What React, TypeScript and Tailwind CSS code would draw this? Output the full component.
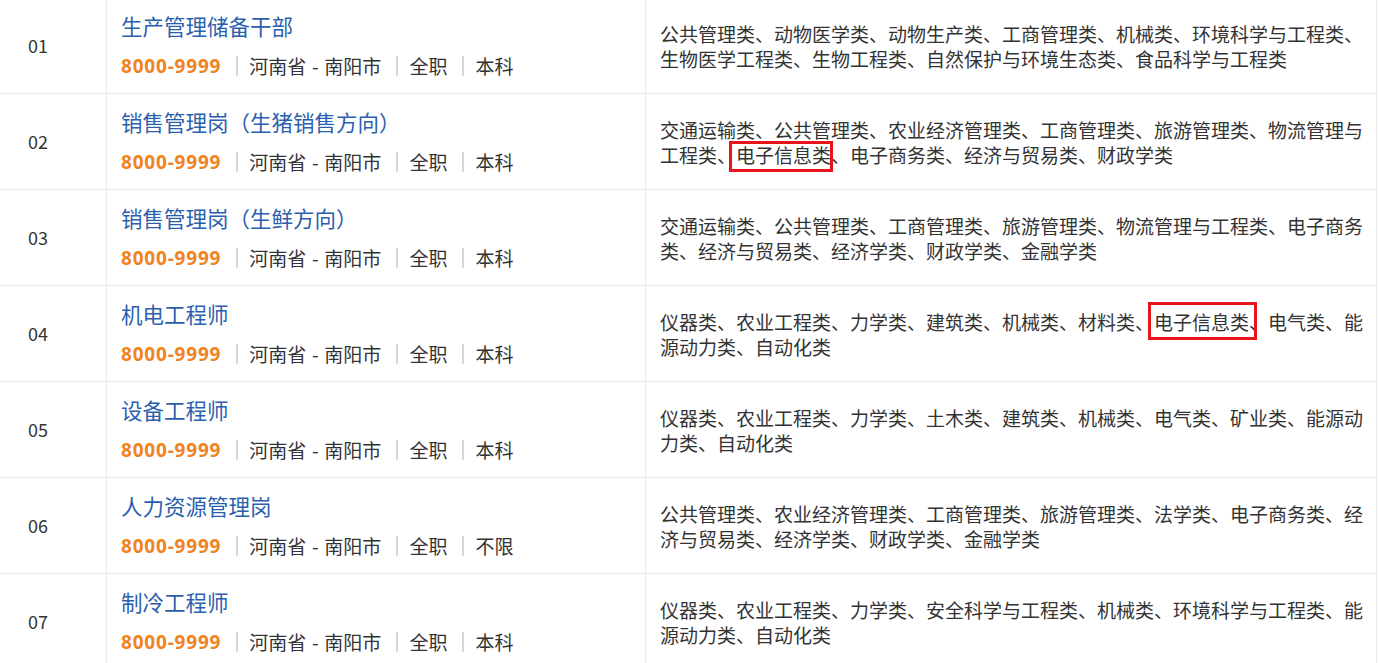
import React from "react";

type Row = {
  no: string;
  title: string;
  edu: string;
  before: string;
  mark?: string;
  after?: string;
  boxClass?: string;
};

const rows: Row[] = [
  {
    no: "01",
    title: "生产管理储备干部",
    edu: "本科",
    before:
      "公共管理类、动物医学类、动物生产类、工商管理类、机械类、环境科学与工程类、生物医学工程类、生物工程类、自然保护与环境生态类、食品科学与工程类",
  },
  {
    no: "02",
    title: "销售管理岗（生猪销售方向）",
    edu: "本科",
    before: "交通运输类、公共管理类、农业经济管理类、工商管理类、旅游管理类、物流管理与工程类、",
    mark: "电子信息类",
    after: "、电子商务类、经济与贸易类、财政学类",
    boxClass: "left-[-7px] right-[-2px] top-[-1px] bottom-[-5px]",
  },
  {
    no: "03",
    title: "销售管理岗（生鲜方向）",
    edu: "本科",
    before:
      "交通运输类、公共管理类、工商管理类、旅游管理类、物流管理与工程类、电子商务类、经济与贸易类、经济学类、财政学类、金融学类",
  },
  {
    no: "04",
    title: "机电工程师",
    edu: "本科",
    before: "仪器类、农业工程类、力学类、建筑类、机械类、材料类、",
    mark: "电子信息类",
    after: "、电气类、能源动力类、自动化类",
    boxClass: "left-[-6px] right-[-8px] top-[-7px] bottom-[-6px]",
  },
  {
    no: "05",
    title: "设备工程师",
    edu: "本科",
    before:
      "仪器类、农业工程类、力学类、土木类、建筑类、机械类、电气类、矿业类、能源动力类、自动化类",
  },
  {
    no: "06",
    title: "人力资源管理岗",
    edu: "不限",
    before:
      "公共管理类、农业经济管理类、工商管理类、旅游管理类、法学类、电子商务类、经济与贸易类、经济学类、财政学类、金融学类",
  },
  {
    no: "07",
    title: "制冷工程师",
    edu: "本科",
    before:
      "仪器类、农业工程类、力学类、安全科学与工程类、机械类、环境科学与工程类、能源动力类、自动化类",
  },
];

function Sep({ children }: { children: React.ReactNode }) {
  return (
    <span className="inline-block ml-[15px] pl-[11px] border-l-2 border-[#d6d6d6] leading-[20px] text-[#333]">
      {children}
    </span>
  );
}

export default function App() {
  return (
    <div
      className="w-[1377px] bg-white mt-[-2px]"
      style={{ fontFamily: '"Noto Sans CJK SC", "Noto Sans", sans-serif' }}
    >
      {rows.map((r) => (
        <div
          key={r.no}
          className="grid grid-cols-[107px_539px_731px] h-[96px] border-b border-[#e9e9f1]"
        >
          <div className="flex items-center pl-[28px] border-r border-[#e9e9f1] text-[18px] text-[#333]">
            {r.no}
          </div>
          <div className="flex flex-col pt-[13px] pl-[14px] border-r border-[#e9e9f1]">
            <div className="text-[21.5px] leading-[30px] text-[#2b5fae] whitespace-nowrap">
              {r.title}
            </div>
            <div className="mt-[15px] flex items-center text-[19px] h-[20px] whitespace-nowrap">
              <span
                className="font-bold text-[#f08320] leading-[20px] tracking-[0.8px]"
                style={{ fontFamily: '"Noto Sans", sans-serif' }}
              >
                8000-9999
              </span>
              <Sep>
                河南省<span className="mx-[1.5px]"> - </span>南阳市
              </Sep>
              <Sep>全职</Sep>
              <Sep>{r.edu}</Sep>
            </div>
          </div>
          <div className="flex items-center pl-[14px] border-r border-[#e9e9f1]">
            <div className="w-[712px] text-[19px] leading-[25px] text-[#333]">
              {r.before}
              {r.mark && (
                <span className="relative inline-block align-top h-[25px]">
                  {r.mark}
                  <span className={`absolute border-[3px] border-[#e8141c] ${r.boxClass}`} />
                </span>
              )}
              {r.after}
            </div>
          </div>
        </div>
      ))}
    </div>
  );
}
